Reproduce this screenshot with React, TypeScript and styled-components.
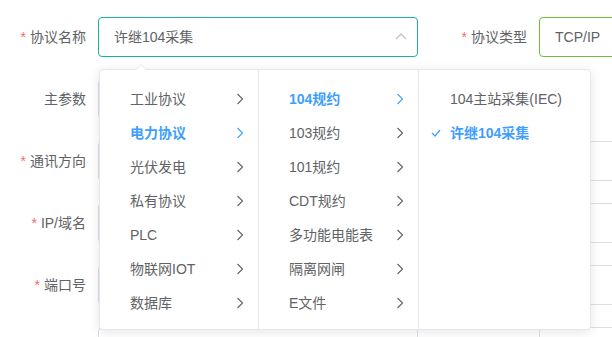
import React from "react";
import styled, { createGlobalStyle } from "styled-components";

const GlobalStyle = createGlobalStyle`
  body {
    margin: 0;
    overflow: hidden;
    background: #fff;
    font-family: "Liberation Sans", "Noto Sans CJK SC", sans-serif;
    font-size: 14px;
    color: #606266;
  }
`;

const Form = styled.div`
  display: grid;
  grid-template-columns: 418px 418px;
  column-gap: 23px;
  row-gap: 22px;
  padding-top: 17px;
`;

const FormItem = styled.div`
  display: flex;
  align-items: center;
  height: 40px;
`;

const Label = styled.label`
  width: 98px;
  flex: none;
  box-sizing: border-box;
  padding-right: 12px;
  text-align: right;
  line-height: 40px;
  color: #606266;
  white-space: nowrap;
`;

const Star = styled.span`
  color: #f56c6c;
  margin-right: 4px;
`;

const InputBox = styled.div<{ $border?: string }>`
  position: relative;
  width: 320px;
  height: 40px;
  box-sizing: border-box;
  border: 1px solid ${({ $border }) => $border || "#dcdfe6"};
  border-radius: 4px;
  padding: 0 15px;
  line-height: 38px;
  color: #606266;
  background: #fff;
`;

const SelectArrow = styled.svg`
  position: absolute;
  right: 10px;
  top: 14px;
`;

const Popup = styled.div`
  position: absolute;
  top: 51px;
  left: 0px;
  z-index: 10;
  display: flex;
  background: #fff;
  border: 1px solid #e4e7ed;
  border-radius: 4px;
  box-shadow: 0 2px 12px 0 rgba(0, 0, 0, 0.1);
`;

const PopperArrow = styled.div`
  position: absolute;
  top: -6px;
  left: 35px;
  width: 0;
  height: 0;
  border-left: 6px solid transparent;
  border-right: 6px solid transparent;
  border-bottom: 6px solid #e4e7ed;

  &::after {
    content: "";
    position: absolute;
    top: 1px;
    left: -6px;
    border-left: 6px solid transparent;
    border-right: 6px solid transparent;
    border-bottom: 6px solid #fff;
  }
`;

const Menu = styled.ul<{ $width: number; $last?: boolean }>`
  list-style: none;
  margin: 0;
  width: ${({ $width }) => $width}px;
  box-sizing: border-box;
  padding: 12px 0 9px;
  border-right: ${({ $last }) => ($last ? "none" : "1px solid #e4e7ed")};
`;

const Node = styled.li<{ $active?: boolean; $indent?: number }>`
  position: relative;
  display: flex;
  align-items: center;
  justify-content: space-between;
  height: 34px;
  padding: 0 14px 0 ${({ $indent }) => $indent ?? 30}px;
  color: ${({ $active }) => ($active ? "#409eff" : "#606266")};
  font-weight: ${({ $active }) => ($active ? 700 : 400)};
  white-space: nowrap;
`;

const Check = styled.svg`
  position: absolute;
  left: 12px;
  top: 13px;
`;

const Chevron = ({ color }: { color: string }) => (
  <svg width="8" height="12" viewBox="0 0 8 12">
    <path d="M1.5 1 L6.5 6 L1.5 11" fill="none" stroke={color} strokeWidth="1.1" />
  </svg>
);

type Item = { label: string; active?: boolean };

const level1: Item[] = [
  { label: "工业协议" },
  { label: "电力协议", active: true },
  { label: "光伏发电" },
  { label: "私有协议" },
  { label: "PLC" },
  { label: "物联网IOT" },
  { label: "数据库" },
];

const level2: Item[] = [
  { label: "104规约", active: true },
  { label: "103规约" },
  { label: "101规约" },
  { label: "CDT规约" },
  { label: "多功能电能表" },
  { label: "隔离网闸" },
  { label: "E文件" },
];

const level3: Item[] = [
  { label: "104主站采集(IEC)" },
  { label: "许继104采集", active: true },
];

const CascaderMenu = ({ items, width }: { items: Item[]; width: number }) => (
  <Menu $width={width}>
    {items.map((it) => (
      <Node key={it.label} $active={it.active}>
        <span>{it.label}</span>
        <Chevron color={it.active ? "#409eff" : "#606266"} />
      </Node>
    ))}
  </Menu>
);

const App: React.FC = () => {
  return (
    <>
      <GlobalStyle />
      <Form>
        <FormItem>
          <Label>
            <Star>*</Star>协议名称
          </Label>
          <InputBox $border="#1ab394">
            许继104采集
            <SelectArrow width="12" height="8" viewBox="0 0 12 8">
              <path d="M1 7 L6 2 L11 7" fill="none" stroke="#c0c4cc" strokeWidth="1.3" />
            </SelectArrow>
            <Popup>
              <PopperArrow />
              <CascaderMenu items={level1} width={159} />
              <CascaderMenu items={level2} width={160} />
              <Menu $width={171} $last>
                {level3.map((it) => (
                  <Node key={it.label} $active={it.active} $indent={31}>
                    {it.active && (
                      <Check width="10" height="8" viewBox="0 0 10 8">
                        <path d="M1 4 L4 7 L9 1" fill="none" stroke="#409eff" strokeWidth="1.2" />
                      </Check>
                    )}
                    <span>{it.label}</span>
                  </Node>
                ))}
              </Menu>
            </Popup>
          </InputBox>
        </FormItem>
        <FormItem>
          <Label>
            <Star>*</Star>协议类型
          </Label>
          <InputBox $border="#67c23a">TCP/IP</InputBox>
        </FormItem>

        <FormItem>
          <Label>主参数</Label>
          <InputBox />
        </FormItem>
        <FormItem />

        <FormItem>
          <Label>
            <Star>*</Star>通讯方向
          </Label>
          <InputBox />
        </FormItem>
        <FormItem>
          <Label>
            <Star>*</Star>超时时间
          </Label>
          <InputBox />
        </FormItem>

        <FormItem>
          <Label>
            <Star>*</Star>IP/域名
          </Label>
          <InputBox />
        </FormItem>
        <FormItem>
          <Label>
            <Star>*</Star>重试次数
          </Label>
          <InputBox />
        </FormItem>

        <FormItem>
          <Label>
            <Star>*</Star>端口号
          </Label>
          <InputBox />
        </FormItem>
        <FormItem>
          <Label>
            <Star>*</Star>采集周期
          </Label>
          <InputBox />
        </FormItem>

        <FormItem>
          <Label />
          <InputBox />
        </FormItem>
        <FormItem>
          <Label />
          <InputBox />
        </FormItem>
      </Form>
    </>
  );
};

export default App;
